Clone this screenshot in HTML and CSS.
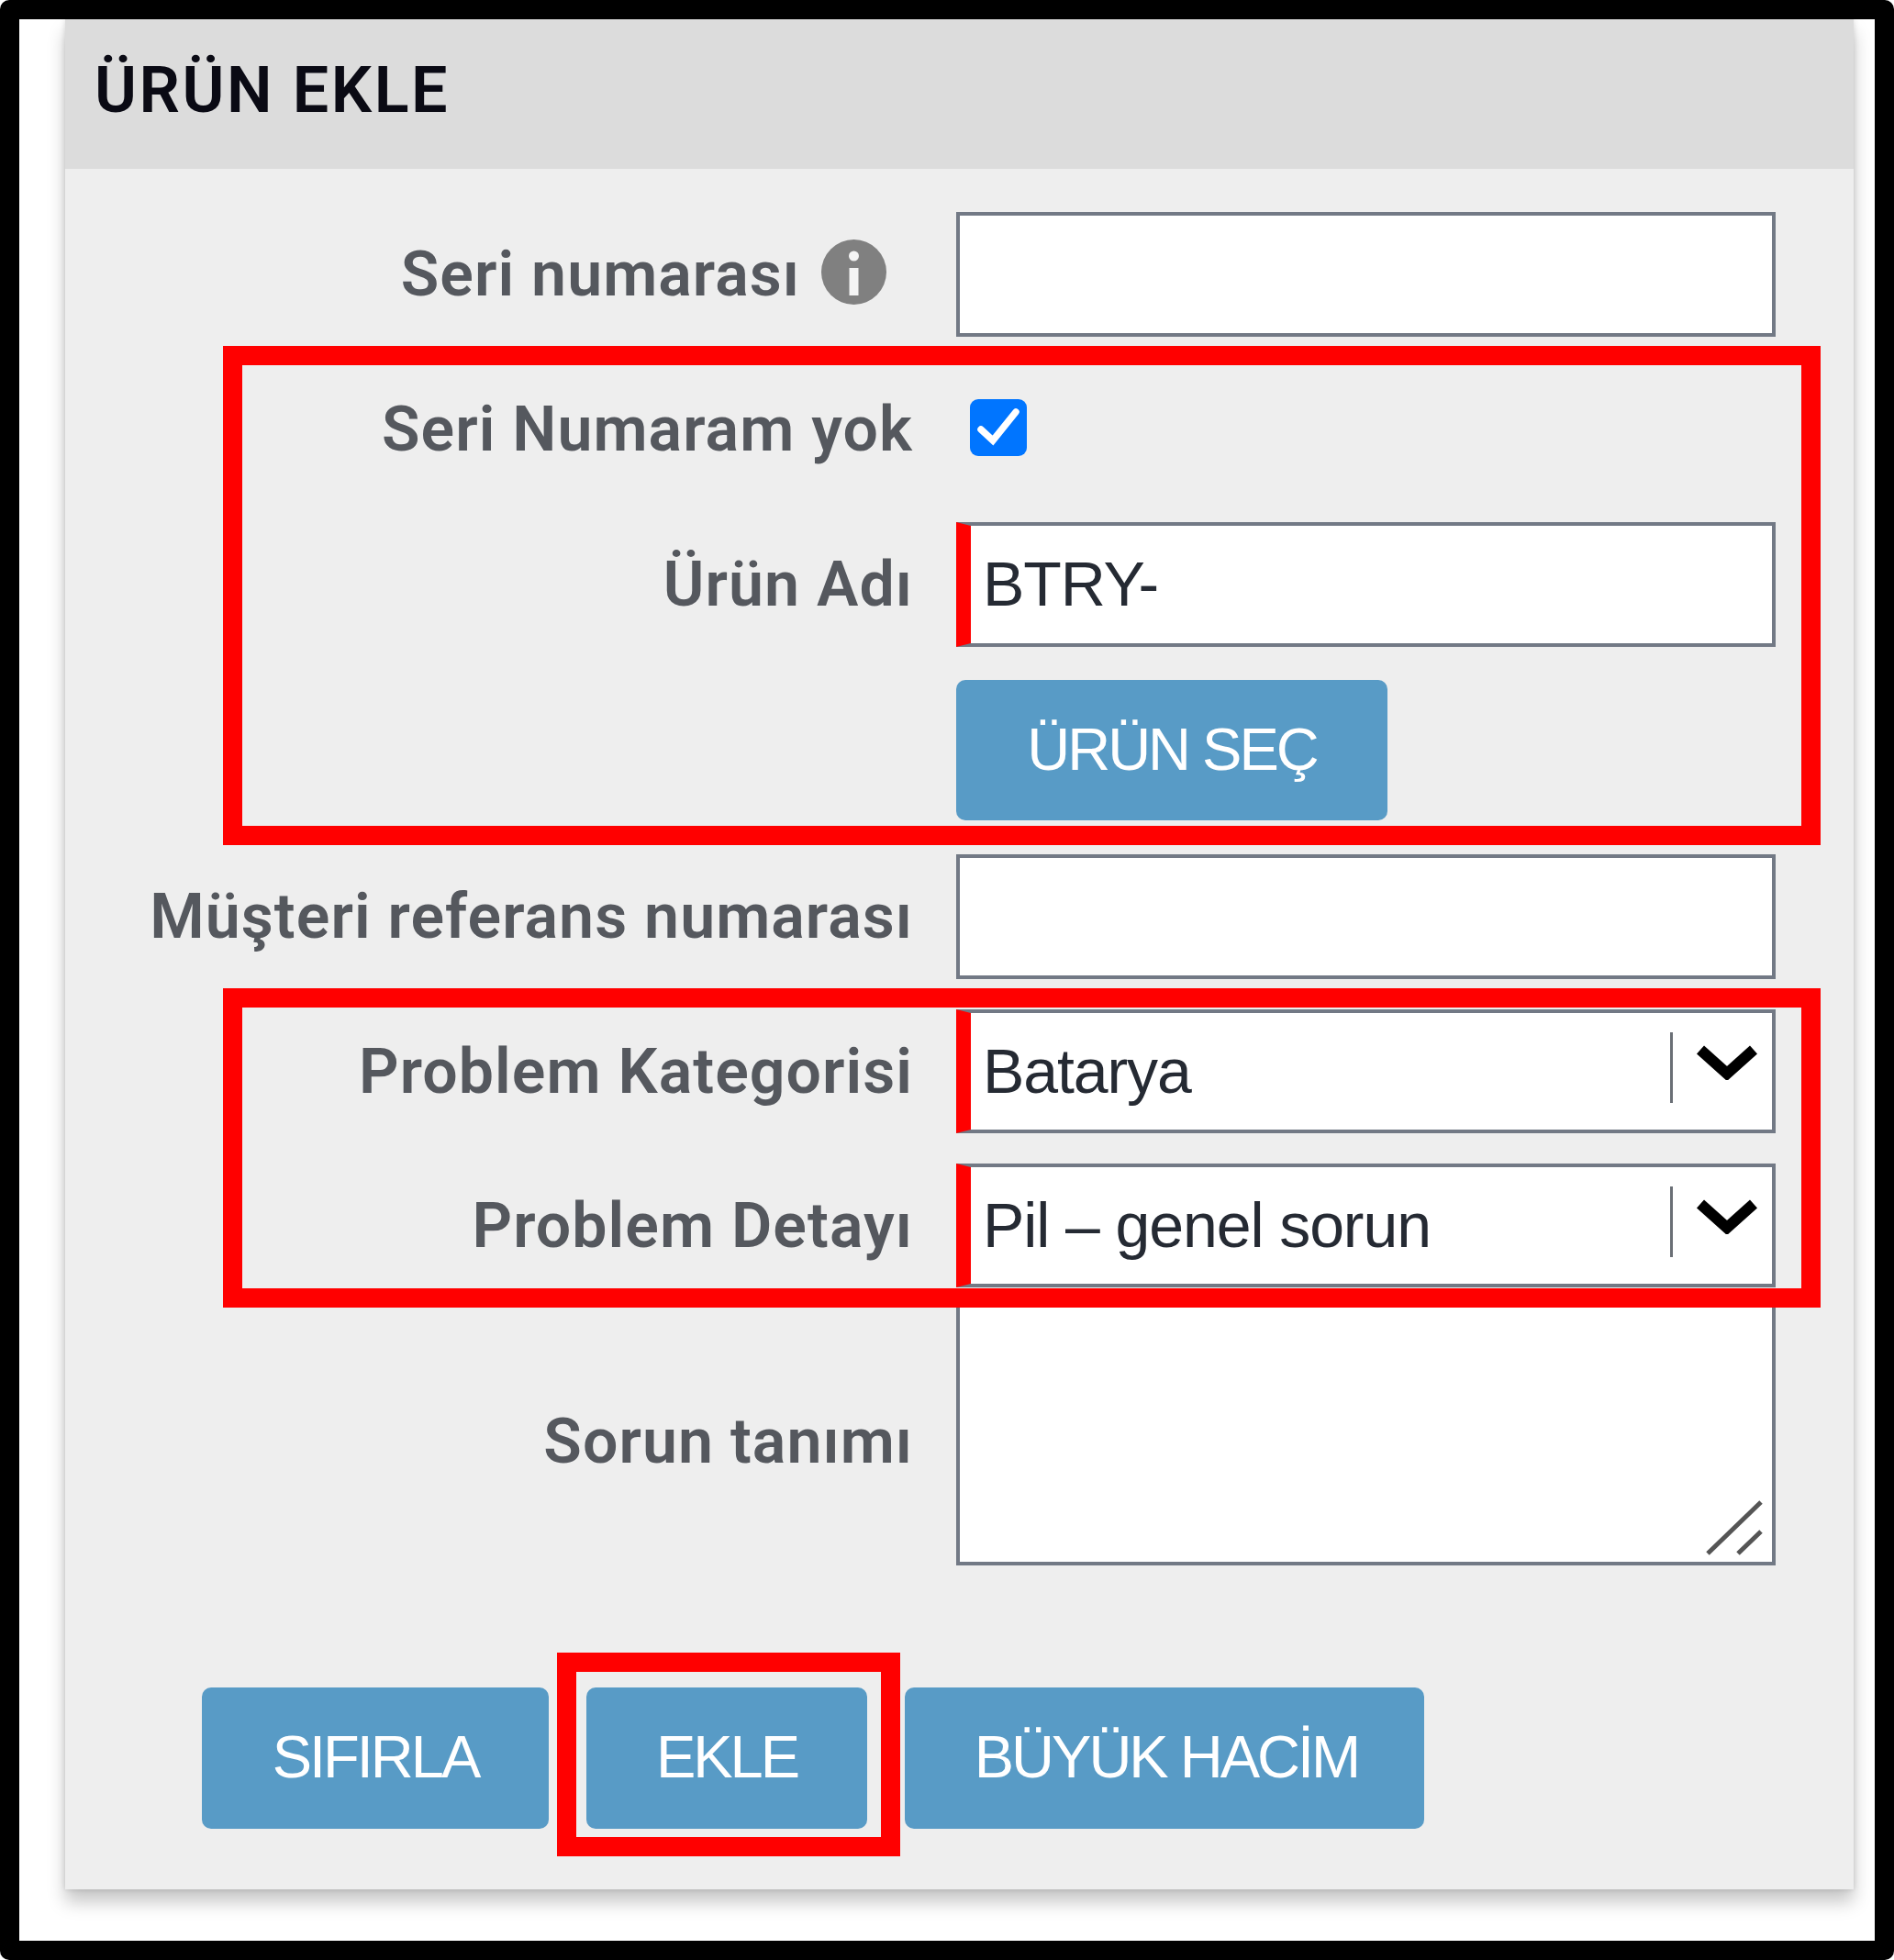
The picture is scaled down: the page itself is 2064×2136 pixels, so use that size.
FILE: index.html
```html
<!DOCTYPE html>
<html lang="tr">
<head>
    <meta charset="UTF-8">
    <title>Ürün Ekle</title>
    <link rel="stylesheet" href="styles.css">
</head>
<body>
<div class="frame">
    <div class="panel">
        <h1 class="panel-title">ÜRÜN EKLE</h1>
        <form class="form-body">
            <div class="form-grid">
                <label class="field-label with-icon">
                    Seri numarası
                    <svg class="info-icon" viewBox="0 0 71 71">
                        <circle cx="35.5" cy="35.5" r="35.5" fill="#808080"/>
                        <circle cx="35.5" cy="18" r="5.5" fill="#f4f4f4"/>
                        <rect x="30.5" y="31" width="10" height="30" fill="#f4f4f4"/>
                    </svg>
                </label>
                <input class="text-input" type="text">

                <label class="field-label">Seri Numaram yok</label>
                <div class="check-cell">
                    <div class="check-box">
                        <svg viewBox="0 0 62 62">
                            <path d="M12 33 L25 45 L50 14" fill="none" stroke="#fff" stroke-width="7.5" stroke-linecap="round"/>
                        </svg>
                    </div>
                </div>

                <label class="field-label">Ürün Adı</label>
                <input class="text-input required" type="text" value="BTRY-">

                <div></div>
                <div class="pick-cell"><button type="button" class="btn btn-pick">ÜRÜN SEÇ</button></div>

                <label class="field-label">Müşteri referans numarası</label>
                <input class="text-input" type="text">

                <label class="field-label">Problem Kategorisi</label>
                <div class="select-wrap">
                    <select class="text-input required"><option>Batarya</option></select>
                    <span class="select-sep"></span>
                    <svg class="select-arrow" viewBox="0 0 70 38">
                        <path d="M6 5 L35 31 L64 5" fill="none" stroke="#000" stroke-width="12"/>
                    </svg>
                </div>

                <label class="field-label">Problem Detayı</label>
                <div class="select-wrap">
                    <select class="text-input required"><option>Pil – genel sorun</option></select>
                    <span class="select-sep"></span>
                    <svg class="select-arrow" viewBox="0 0 70 38">
                        <path d="M6 5 L35 31 L64 5" fill="none" stroke="#000" stroke-width="12"/>
                    </svg>
                </div>

                <label class="field-label">Sorun tanımı</label>
                <div class="area-wrap">
                    <textarea class="text-input text-area"></textarea>
                    <svg class="area-grip" viewBox="0 0 63 60">
                        <path d="M3 58 L61 2 M36 58 L61 34" fill="none" stroke="#555" stroke-width="5"/>
                    </svg>
                </div>
            </div>

            <div class="actions">
                <button type="button" class="btn btn-reset">SIFIRLA</button>
                <button type="button" class="btn btn-add">EKLE</button>
                <button type="button" class="btn btn-bulk">BÜYÜK HACİM</button>
            </div>
        </form>
    </div>

    <div class="mark mark-product"></div>
    <div class="mark mark-problem"></div>
    <div class="mark mark-add"></div>
</div>
</body>
</html>
```

FILE: styles.css
```css
* {
    box-sizing: border-box;
}
body {
    margin: 0;
    background: #fff;
    font-family: "Liberation Sans", Arial, sans-serif;
}
.frame {
    position: relative;
    height: 2136px;
    padding: 0 23px 0 50px;
    border: 21px solid #000;
    border-radius: 10px;
    background: #fff;
    overflow: hidden;
}
.panel {
    height: 2038px;
    background: #eee;
    box-shadow: 0 14px 18px rgba(0, 0, 0, 0.22), 0 0 6px rgba(0, 0, 0, 0.15);
}
.panel-title {
    height: 163px;
    margin: 0;
    padding-left: 32px;
    background: #dcdcdc;
    color: #0a0a14;
    font-family: Roboto, "Liberation Sans", sans-serif;
    font-size: 70px;
    font-weight: 600;
    line-height: 155px;
    letter-spacing: 2.5px;
}
.form-body {
    padding-top: 47px;
}
.form-grid {
    display: grid;
    grid-template-columns: 922px 893px;
    column-gap: 49px;
    row-gap: 33px;
}
.field-label {
    display: flex;
    align-items: center;
    justify-content: flex-end;
    margin-right: -2px;
    color: #55585e;
    font-family: Roboto, "Liberation Sans", sans-serif;
    font-size: 68px;
    font-weight: 600;
    letter-spacing: 1.05px;
    white-space: nowrap;
}
.with-icon {
    padding-right: 29px;
}
.info-icon {
    width: 71px;
    height: 71px;
    margin-left: 23px;
    margin-bottom: 6px;
}
.text-input {
    display: block;
    width: 100%;
    height: 136px;
    padding: 0 0 2px 13px;
    border: 4px solid #727985;
    border-radius: 0;
    background: #fff;
    color: #252a33;
    font-family: "Liberation Sans", Arial, sans-serif;
    font-size: 68px;
    letter-spacing: -1.1px;
    outline: none;
    appearance: none;
}
.required {
    border-left: 16px solid #f00;
}
.select-wrap .text-input {
    height: 135px;
}
.check-cell {
    display: flex;
    align-items: center;
    height: 136px;
    padding: 0 0 4px 15px;
}
.check-box {
    width: 62px;
    height: 62px;
    border-radius: 9px;
    background: #0075ff;
}
.check-box svg {
    display: block;
}
.pick-cell {
    padding: 3px 0 4px;
}
.btn {
    height: 153px;
    padding: 0 0 3px;
    border: none;
    border-radius: 10px;
    background: #589bc6;
    color: #fff;
    font-family: "Liberation Sans", Arial, sans-serif;
    font-size: 65px;
    letter-spacing: -3px;
}
.btn-pick {
    width: 470px;
}
.select-wrap,
.area-wrap {
    position: relative;
}
.select-sep {
    position: absolute;
    left: 778px;
    top: 25px;
    width: 3px;
    height: 77px;
    background: #6a6f76;
}
.select-arrow {
    position: absolute;
    left: 805px;
    top: 39px;
    width: 70px;
    height: 38px;
}
/* top of the textarea runs under the red mark */
.text-area {
    height: 285px;
    margin-top: -15px;
    resize: none;
}
.area-grip {
    position: absolute;
    right: 14px;
    bottom: 11px;
    width: 63px;
    height: 60px;
}
.actions {
    display: flex;
    gap: 41px;
    margin-top: 133px;
    padding-left: 149px;
}
.actions .btn {
    height: 154px;
}
.btn-reset {
    width: 378px;
}
.btn-add {
    width: 306px;
}
.btn-bulk {
    width: 566px;
    padding-left: 4px;
}
.mark {
    position: absolute;
    border: 21px solid #f00;
}
.mark-product {
    left: 222px;
    top: 356px;
    width: 1741px;
    height: 544px;
}
.mark-problem {
    left: 222px;
    top: 1056px;
    width: 1741px;
    height: 348px;
}
.mark-add {
    left: 586px;
    top: 1780px;
    width: 374px;
    height: 222px;
}
```
